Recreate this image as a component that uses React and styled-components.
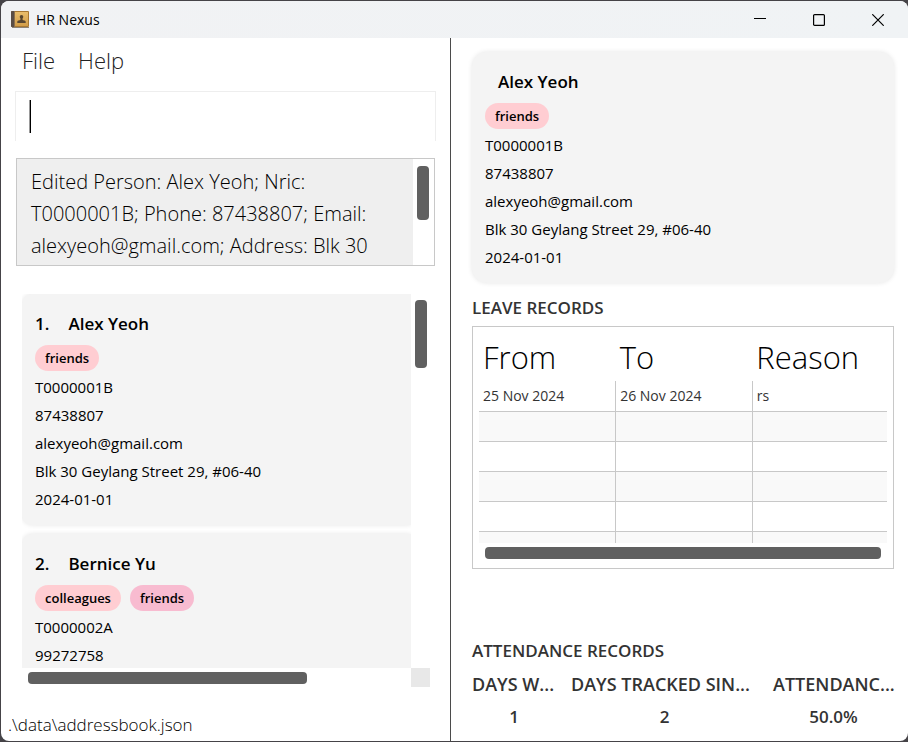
import React from "react";
import styled, { createGlobalStyle } from "styled-components";

const GlobalStyle = createGlobalStyle`
  *, *::before, *::after { box-sizing: border-box; }
  html, body, #root { height: 100%; }
  body {
    margin: 0;
    background: #454347;
    color: #000;
    font-family: "Open Sans", "Noto Sans", sans-serif;
    font-size: 15px;
  }
  button, input { font: inherit; color: inherit; }
`;

const Window = styled.div`
  height: 100vh;
  padding: 1px 0 1px 1px;
`;

const Frame = styled.div`
  height: 100%;
  display: flex;
  flex-direction: column;
  background: #fff;
  border-radius: 8px;
  overflow: hidden;
`;

const TitleBar = styled.header`
  flex: none;
  height: 37px;
  display: flex;
  align-items: center;
  gap: 7px;
  padding: 0 7px 0 10px;
  background: linear-gradient(90deg, #f1f2f4, #f0f3f5);
`;

const WindowTitle = styled.h1`
  margin: 0;
  flex: 1;
  font-size: 14px;
  font-weight: 400;
`;

const CaptionButtons = styled.div`
  display: flex;
  gap: 13px;
`;

const CaptionButton = styled.button`
  width: 46px;
  height: 36px;
  display: grid;
  place-items: center;
  border: 0;
  padding: 0;
  background: transparent;
`;

const Panes = styled.div`
  flex: 1;
  min-height: 0;
  display: grid;
  grid-template-columns: minmax(0, 450fr) minmax(0, 457fr);
`;

const LeftPane = styled.div`
  display: flex;
  flex-direction: column;
  min-height: 0;
  border-right: 1px solid #4b4b4b;
`;

const MenuBar = styled.nav`
  flex: none;
  display: flex;
  gap: 23px;
  height: 53px;
  padding: 5px 21px 0;
`;

const MenuButton = styled.button`
  height: 34px;
  border: 0;
  padding: 0;
  background: transparent;
  font-size: 22px;
  font-weight: 300;
  color: #222;
`;

const CommandBox = styled.div`
  flex: none;
  position: relative;
  height: 50px;
  margin: 0 14px 17px;
`;

const CommandInput = styled.input`
  width: 100%;
  height: 100%;
  padding: 0 14px;
  border: 1px solid #eee;
  border-bottom: 0;
  background: #fff;
  font-size: 20px;
  font-weight: 300;
  outline: none;
  caret-color: transparent;
`;

const Caret = styled.span`
  position: absolute;
  left: 14px;
  top: 9px;
  width: 2px;
  height: 33px;
  border-left: 1px solid #999;
  background: #000;
`;

const ResultBox = styled.div`
  flex: none;
  display: flex;
  height: 108px;
  margin: 0 15px 28px;
  border: 1px solid #c8c8c8;
`;

const ResultText = styled.p`
  flex: 1;
  margin: 0;
  padding: 7px 14px;
  overflow: hidden;
  background: #efefef;
  font-size: 20px;
  line-height: 32px;
  font-weight: 300;
`;

const VerticalTrack = styled.div`
  flex: none;
  width: ${(p) => p.$width};
  padding: ${(p) => p.$inset};
`;

const Thumb = styled.div`
  width: ${(p) => p.$width || "12px"};
  height: ${(p) => p.$height || "12px"};
  border-radius: 4px;
  background: #606060;
`;

const ListArea = styled.div`
  flex: 1;
  min-height: 0;
  display: grid;
  grid-template-columns: minmax(0, 1fr) 19px;
  grid-template-rows: minmax(0, 1fr) 19px;
  margin: 0 20px 0 21px;
`;

const PersonList = styled.ol`
  margin: 0;
  padding: 0;
  list-style: none;
  display: flex;
  flex-direction: column;
  gap: 9px;
  overflow: hidden;
`;

const HorizontalTrack = styled.div`
  padding: 4px 6px;
`;

const Corner = styled.div`
  background: #e8e8e8;
`;

const Card = styled.article`
  flex: none;
  display: flex;
  flex-direction: column;
  padding: 14px 13px 12px;
  border-radius: ${(p) => (p.$clipped ? "10px 0 0 10px" : "15px")};
  background: #f4f4f4;
  box-shadow: 0 0 5px rgba(0, 0, 0, 0.1);
`;

const CardName = styled.h2`
  margin: 0;
  padding-left: ${(p) => (p.$indent ? "13px" : "0")};
  display: flex;
  gap: 19px;
  font-size: 17px;
  line-height: 31px;
  font-weight: 600;
`;

const Tags = styled.div`
  display: flex;
  gap: 9px;
  padding: 6px 0 2px;
`;

const Tag = styled.span`
  padding: 0 10px;
  border-radius: 13px;
  background: ${(p) => p.$color};
  font-size: 13px;
  line-height: 26px;
  font-weight: 600;
`;

const Detail = styled.div`
  line-height: 28px;
  font-size: 15px;
  white-space: nowrap;
`;

const StatusBar = styled.footer`
  flex: none;
  height: 54px;
  padding: 25px 7px 0;
  font-size: 17px;
  line-height: 26px;
  font-weight: 300;
`;

const RightPane = styled.div`
  display: flex;
  flex-direction: column;
  min-height: 0;
  padding: 14px 14px 0 21px;
`;

const SectionTitle = styled.h3`
  margin: 0;
  font-size: 17px;
  line-height: 24px;
  font-weight: 600;
  color: #333;
`;

const LeaveSection = styled.section`
  flex: 1;
  padding-top: 13px;
`;

const TableBox = styled.div`
  margin-top: 6px;
  padding: 6px 6px 9px;
  border: 1px solid #c8c8c8;
`;

const TableClip = styled.div`
  height: 210px;
  overflow: hidden;
`;

const Table = styled.table`
  width: 100%;
  table-layout: fixed;
  border-collapse: collapse;
  font-size: 14px;
  color: #333;

  th {
    height: 48px;
    padding: 0 4px;
    text-align: left;
    font-size: 31px;
    line-height: 48px;
    font-weight: 300;
    color: #000;
  }
  th:not(:last-child) {
    width: 33.5%;
  }
  td {
    height: 30px;
    padding: 0 4px;
    border-bottom: 1px solid #c8c8c8;
  }
  td + td {
    border-left: 1px solid #c8c8c8;
  }
  tbody tr:nth-child(even) {
    background: #f9f9f9;
  }
`;

const TableTrack = styled.div`
  padding: 4px 6px 0;
`;

const AttendanceSection = styled.section`
  padding-bottom: 7px;
`;

const Stats = styled.dl`
  margin: 5px 0 0;
  display: grid;
  grid-template-columns: minmax(0, 84fr) minmax(0, 187fr) minmax(0, 121fr);
  column-gap: 15px;
  font-size: 17px;
  font-weight: 600;
  color: #333;
`;

const Stat = styled.div`
  dt {
    font-size: 18px;
    line-height: 32px;
    white-space: nowrap;
  }
  dd {
    margin: 0;
    text-align: center;
    line-height: 34px;
  }
`;

const people = [
  {
    name: "Alex Yeoh",
    tags: [["friends", "#ffcdd2"]],
    details: [
      "T0000001B",
      "87438807",
      "alexyeoh@gmail.com",
      "Blk 30 Geylang Street 29, #06-40",
      "2024-01-01",
    ],
  },
  {
    name: "Bernice Yu",
    tags: [
      ["colleagues", "#ffcdd2"],
      ["friends", "#f8bbd0"],
    ],
    details: ["T0000002A", "99272758"],
  },
];

const leaveRows = [
  ["25 Nov 2024", "26 Nov 2024", "rs"],
  ["", "", ""],
  ["", "", ""],
  ["", "", ""],
  ["", "", ""],
  ["", "", ""],
];

const stats = [
  ["DAYS W...", "1"],
  ["DAYS TRACKED SIN...", "2"],
  ["ATTENDANC...", "50.0%"],
];

function AppIcon() {
  return (
    <svg width="18" height="17" viewBox="0 0 18 17" aria-hidden="true">
      <defs>
        <linearGradient id="cover" x1="0" y1="0" x2="0" y2="1">
          <stop offset="0" stopColor="#e9bd6c" />
          <stop offset="1" stopColor="#d29d49" />
        </linearGradient>
      </defs>
      <rect x="0" y="0" width="18" height="16" rx="1" fill="#a87832" />
      <rect x="4" y="1" width="13" height="14" fill="url(#cover)" />
      <path d="M0 1Q0 0 1 0H3V16H1Q0 16 0 15Z" fill="#5a4d45" />
      <path d="M3.500 0V16" stroke="#8b6f4c" />
      <path d="M1 16.5H18" stroke="#8d8275" />
      <path
        d="M10.500 4a1.800 1.800 0 0 1 1.800 1.800c0 .9-.6 1.300-.8 2-.2.9.3 1.500 2 1.800.9.2 1.200.6 1.200 1.600v.8H6.300v-.8c0-1 .3-1.400 1.200-1.600 1.700-.3 2.200-.9 2-1.800-.2-.7-.8-1.100-.8-2A1.800 1.800 0 0 1 10.500 4z"
        fill="#584630"
      />
    </svg>
  );
}

function PersonCard({ person, index, clipped }) {
  return (
    <Card $clipped={clipped}>
      <CardName $indent={!index}>
        {index && <span>{index}.</span>}
        <span>{person.name}</span>
      </CardName>
      <Tags>
        {person.tags.map(([label, color]) => (
          <Tag key={label} $color={color}>
            {label}
          </Tag>
        ))}
      </Tags>
      {person.details.map((line) => (
        <Detail key={line}>{line}</Detail>
      ))}
    </Card>
  );
}

export default function App() {
  return (
    <Window>
      <GlobalStyle />
      <Frame>
        <TitleBar>
          <AppIcon />
          <WindowTitle>HR Nexus</WindowTitle>
          <CaptionButtons>
            <CaptionButton aria-label="Minimize">
              <svg width="12" height="12" viewBox="0 0 12 12">
                <path d="M0 4.500H12" stroke="#000" />
              </svg>
            </CaptionButton>
            <CaptionButton aria-label="Maximize">
              <svg width="12" height="12" viewBox="0 0 12 12">
                <rect x=".6" y=".6" width="10.800" height="10.800" rx="1" fill="none" stroke="#000" strokeWidth="1.200" />
              </svg>
            </CaptionButton>
            <CaptionButton aria-label="Close">
              <svg width="12" height="12" viewBox="0 0 12 12">
                <path d="M.3.3 11.700 11.700M11.700.3.3 11.700" stroke="#000" strokeWidth="1.200" />
              </svg>
            </CaptionButton>
          </CaptionButtons>
        </TitleBar>
        <Panes>
          <LeftPane>
            <MenuBar>
              <MenuButton>File</MenuButton>
              <MenuButton>Help</MenuButton>
            </MenuBar>
            <CommandBox>
              <CommandInput type="text" aria-label="Command" />
              <Caret />
            </CommandBox>
            <ResultBox>
              <ResultText>
                Edited Person: Alex Yeoh; Nric:
                <br />
                T0000001B; Phone: 87438807; Email:
                <br />
                alexyeoh@gmail.com; Address: Blk 30
              </ResultText>
              <VerticalTrack $width="21px" $inset="7px 4px">
                <Thumb $height="54px" />
              </VerticalTrack>
            </ResultBox>
            <ListArea>
              <PersonList>
                {people.map((person, i) => (
                  <li key={person.name}>
                    <PersonCard person={person} index={i + 1} clipped />
                  </li>
                ))}
              </PersonList>
              <VerticalTrack $width="19px" $inset="6px 4px">
                <Thumb $height="68px" />
              </VerticalTrack>
              <HorizontalTrack>
                <Thumb $width="74%" />
              </HorizontalTrack>
              <Corner />
            </ListArea>
            <StatusBar>.\data\addressbook.json</StatusBar>
          </LeftPane>
          <RightPane>
            <PersonCard person={people[0]} />
            <LeaveSection>
              <SectionTitle>LEAVE RECORDS</SectionTitle>
              <TableBox>
                <TableClip>
                  <Table>
                    <thead>
                      <tr>
                        <th>From</th>
                        <th>To</th>
                        <th>Reason</th>
                      </tr>
                    </thead>
                    <tbody>
                      {leaveRows.map((row, r) => (
                        <tr key={r}>
                          {row.map((cell, c) => (
                            <td key={c}>{cell}</td>
                          ))}
                        </tr>
                      ))}
                    </tbody>
                  </Table>
                </TableClip>
                <TableTrack>
                  <Thumb $width="100%" />
                </TableTrack>
              </TableBox>
            </LeaveSection>
            <AttendanceSection>
              <SectionTitle>ATTENDANCE RECORDS</SectionTitle>
              <Stats>
                {stats.map(([label, value]) => (
                  <Stat key={label}>
                    <dt>{label}</dt>
                    <dd>{value}</dd>
                  </Stat>
                ))}
              </Stats>
            </AttendanceSection>
          </RightPane>
        </Panes>
      </Frame>
    </Window>
  );
}
